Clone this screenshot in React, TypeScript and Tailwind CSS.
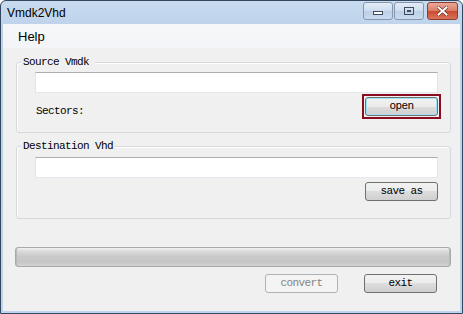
export default function App() {
  const mono = { fontFamily: '"Liberation Mono", "DejaVu Sans Mono", monospace' };
  const btn =
    "w-[73px] h-[19px] rounded-[3px] border text-[11px] tracking-[-0.6px] leading-none flex items-center justify-center";
  const normal =
    "border-[#707070] text-black bg-[linear-gradient(to_bottom,#f2f2f2_0%,#ebebeb_50%,#dddddd_50%,#cfcfcf_100%)]";

  return (
    <div
      className="w-[463px] h-[314px] border border-[#33475e] rounded-t-[6px] bg-[linear-gradient(to_bottom,#c8dbef,#bcd2ea_30px,#bfd4eb)] flex flex-col overflow-hidden"
      style={{ fontFamily: '"Liberation Sans", Arial, sans-serif' }}
    >
      {/* Title bar */}
      <div className="h-[23px] flex items-start justify-between pl-[6px] pr-[4px]">
        <span className="text-[12px] leading-none pt-[6px] text-black">Vmdk2Vhd</span>
        <div className="flex items-start gap-[3px] pt-[1px]">
          <div className="flex gap-[1px]">
            <div className="w-[30px] h-[18px] rounded-[3px] border border-[#8497b0] flex items-center justify-center bg-[linear-gradient(to_bottom,#e4edf7,#cddcee_50%,#bccfe6_50%,#cadbef)]">
              <div className="w-[10px] h-[4px] mt-[4px] border border-[#3e4c5e] bg-white" />
            </div>
            <div className="w-[30px] h-[18px] rounded-[3px] border border-[#8497b0] flex items-center justify-center bg-[linear-gradient(to_bottom,#e4edf7,#cddcee_50%,#bccfe6_50%,#cadbef)]">
              <div className="w-[10px] h-[8px] border border-[#3e4c5e] flex items-center justify-center">
                <div className="w-[4px] h-[2px] border border-[#3e4c5e]" />
              </div>
            </div>
          </div>
          <div className="w-[31px] h-[18px] rounded-[3px] border border-[#8a3d30] flex items-center justify-center bg-[linear-gradient(to_bottom,#eba99a,#db7b64_50%,#c94a2f_50%,#d9735b)]">
            <svg width="11" height="10" viewBox="0 0 11 10">
              <path d="M1.5 1.5 L9.5 8.5 M9.5 1.5 L1.5 8.5" stroke="#5a2a20" strokeWidth="3.2" strokeLinecap="square" />
              <path d="M1.5 1.5 L9.5 8.5 M9.5 1.5 L1.5 8.5" stroke="#ffffff" strokeWidth="2" strokeLinecap="square" />
            </svg>
          </div>
        </div>
      </div>

      {/* Client area */}
      <div className="flex-1 mx-[2px] mb-[2px] bg-[#f0f0f0] flex flex-col">
        {/* Menu */}
        <div className="h-[24px] bg-[linear-gradient(to_bottom,#f6f7f9,#f2f4f7)] flex items-center pl-[15px]">
          <span className="text-[13px] leading-none text-black">Help</span>
        </div>

        <div className="flex flex-col pl-[12px] pr-[9px]" style={mono}>
          {/* Source group */}
          <div className="relative ml-[1px] mt-[14px] h-[71px] border border-[#d5d9dd] rounded-[3px] shadow-[inset_1px_1px_0_#ffffff] flex flex-col pl-[18px] pr-[12px] pt-[9px]">
            <span className="absolute left-[4px] -top-[7px] bg-[#f0f0f0] pl-[2px] pr-[6px] text-[11px] tracking-[-0.6px] leading-[12px] text-black">
              Source Vmdk
            </span>
            <div className="h-[21px] bg-white border border-[#e2e3ea] border-t-[#abadb3] border-b-[#e3e9ef]" />
            <div className="flex items-start justify-between mt-[4px]">
              <span className="mt-[8px] ml-[1px] text-[11px] tracking-[-0.6px] leading-[12px] text-black">Sectors:</span>
              <div className="-m-[3px] p-[1px] border-2 border-[#8a0d1f]">
                <button
                  className={`${btn} ${normal} border-[#3c7fb1] shadow-[inset_0_0_0_1px_#9fe3f8]`}
                  style={mono}
                >
                  open
                </button>
              </div>
            </div>
          </div>

          {/* Destination group */}
          <div className="relative ml-[1px] mt-[13px] h-[73px] border border-[#d5d9dd] rounded-[3px] shadow-[inset_1px_1px_0_#ffffff] flex flex-col pl-[18px] pr-[12px] pt-[10px]">
            <span className="absolute left-[4px] -top-[7px] bg-[#f0f0f0] pl-[2px] pr-[2px] text-[11px] tracking-[-0.6px] leading-[12px] text-black">
              Destination Vhd
            </span>
            <div className="h-[21px] bg-white border border-[#e2e3ea] border-t-[#abadb3] border-b-[#e3e9ef]" />
            <div className="flex justify-end mt-[4px]">
              <button className={`${btn} ${normal}`} style={mono}>
                save as
              </button>
            </div>
          </div>

          {/* Progress */}
          <div className="mt-[28px] h-[20px] rounded-[3px] border border-[#a9a9a9] bg-[linear-gradient(to_bottom,#f2f2f2_0px,#dcdcdc_3px,#cacaca_8px,#c6c6c6_14px,#d4d4d4)] shadow-[inset_1px_0_0_#b8b8b8,inset_-1px_0_0_#b8b8b8]" />

          {/* Buttons */}
          <div className="flex justify-end gap-[26px] mt-[7px] pr-[14px]">
            <button
              disabled
              className={`${btn} border-[#adb2b5] bg-[#f4f4f4] text-[#838383]`}
              style={mono}
            >
              convert
            </button>
            <button className={`${btn} ${normal}`} style={mono}>
              exit
            </button>
          </div>
        </div>
      </div>
    </div>
  );
}
